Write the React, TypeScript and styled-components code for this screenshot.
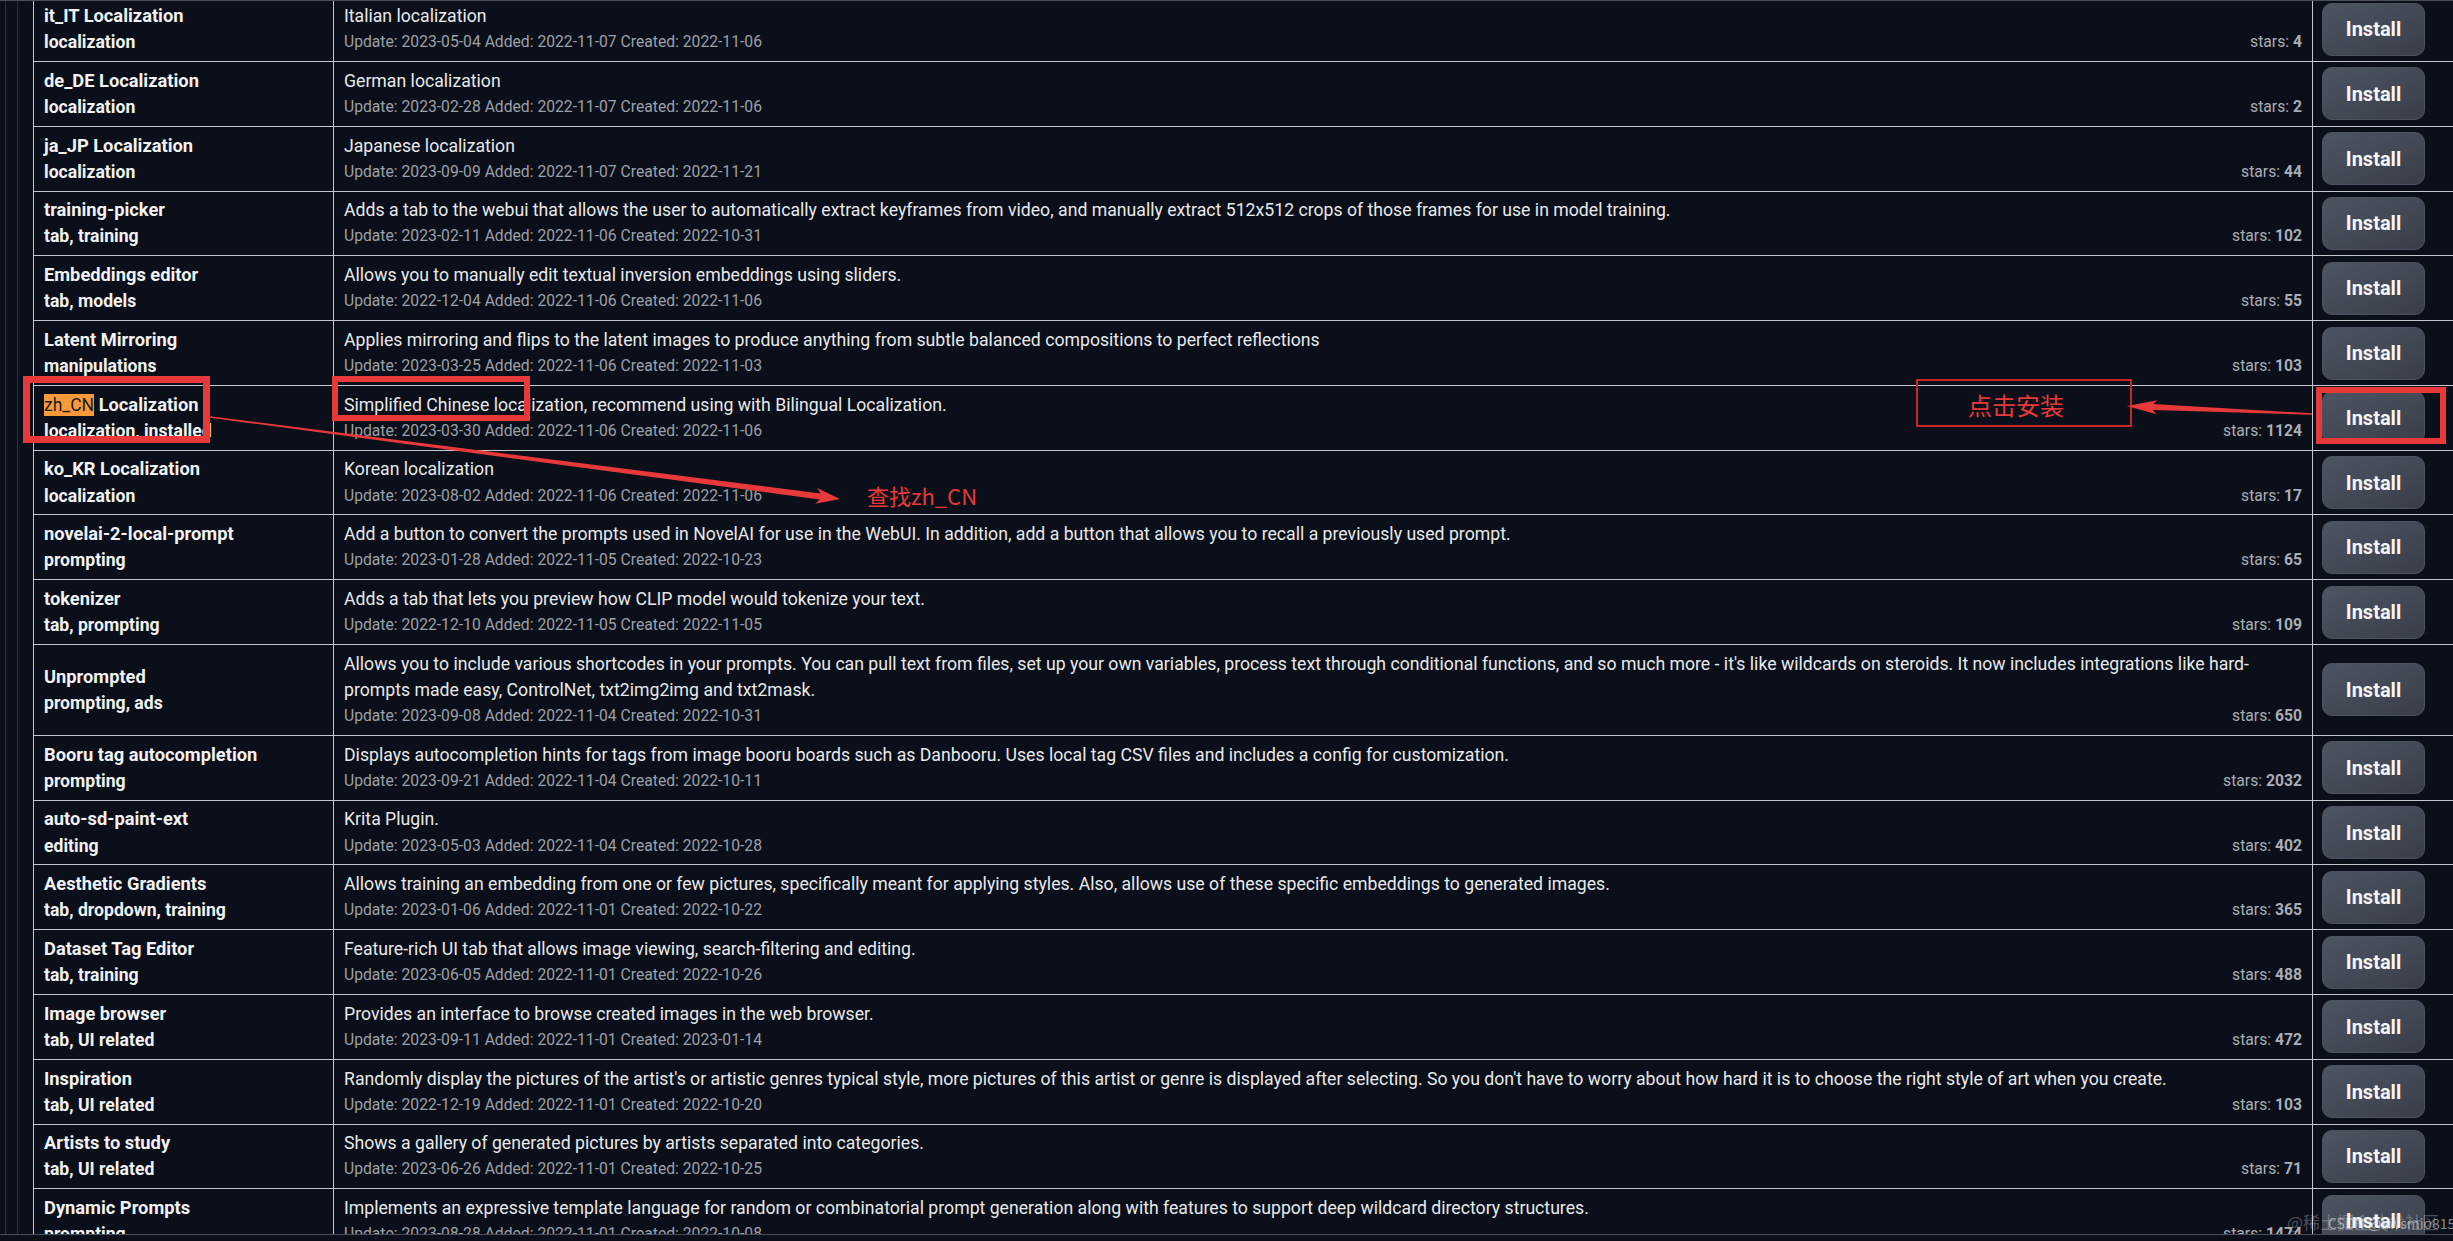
import React from "react";
import styled, { createGlobalStyle } from "styled-components";

const GlobalStyle = createGlobalStyle`
  html, body {
    margin: 0;
    padding: 0;
    background: #0b0f19;
  }
  body {
    font-family: Roboto, "Noto Sans", "Liberation Sans", sans-serif;
    overflow: hidden;
  }
`;

type Extension = {
  name: string;
  tags: string;
  desc: string;
  update: string;
  added: string;
  created: string;
  stars: number;
  match?: string;
};

const extensions: Extension[] = [
  { name: "it_IT Localization", tags: "localization", desc: "Italian localization", update: "2023-05-04", added: "2022-11-07", created: "2022-11-06", stars: 4 },
  { name: "de_DE Localization", tags: "localization", desc: "German localization", update: "2023-02-28", added: "2022-11-07", created: "2022-11-06", stars: 2 },
  { name: "ja_JP Localization", tags: "localization", desc: "Japanese localization", update: "2023-09-09", added: "2022-11-07", created: "2022-11-21", stars: 44 },
  { name: "training-picker", tags: "tab, training", desc: "Adds a tab to the webui that allows the user to automatically extract keyframes from video, and manually extract 512x512 crops of those frames for use in model training.", update: "2023-02-11", added: "2022-11-06", created: "2022-10-31", stars: 102 },
  { name: "Embeddings editor", tags: "tab, models", desc: "Allows you to manually edit textual inversion embeddings using sliders.", update: "2022-12-04", added: "2022-11-06", created: "2022-11-06", stars: 55 },
  { name: "Latent Mirroring", tags: "manipulations", desc: "Applies mirroring and flips to the latent images to produce anything from subtle balanced compositions to perfect reflections", update: "2023-03-25", added: "2022-11-06", created: "2022-11-03", stars: 103 },
  { name: "Localization", match: "zh_CN", tags: "localization, installed", desc: "Simplified Chinese localization, recommend using with Bilingual Localization.", update: "2023-03-30", added: "2022-11-06", created: "2022-11-06", stars: 1124 },
  { name: "ko_KR Localization", tags: "localization", desc: "Korean localization", update: "2023-08-02", added: "2022-11-06", created: "2022-11-06", stars: 17 },
  { name: "novelai-2-local-prompt", tags: "prompting", desc: "Add a button to convert the prompts used in NovelAI for use in the WebUI. In addition, add a button that allows you to recall a previously used prompt.", update: "2023-01-28", added: "2022-11-05", created: "2022-10-23", stars: 65 },
  { name: "tokenizer", tags: "tab, prompting", desc: "Adds a tab that lets you preview how CLIP model would tokenize your text.", update: "2022-12-10", added: "2022-11-05", created: "2022-11-05", stars: 109 },
  { name: "Unprompted", tags: "prompting, ads", desc: "Allows you to include various shortcodes in your prompts. You can pull text from files, set up your own variables, process text through conditional functions, and so much more - it's like wildcards on steroids. It now includes integrations like hard-prompts made easy, ControlNet, txt2img2img and txt2mask.", update: "2023-09-08", added: "2022-11-04", created: "2022-10-31", stars: 650 },
  { name: "Booru tag autocompletion", tags: "prompting", desc: "Displays autocompletion hints for tags from image booru boards such as Danbooru. Uses local tag CSV files and includes a config for customization.", update: "2023-09-21", added: "2022-11-04", created: "2022-10-11", stars: 2032 },
  { name: "auto-sd-paint-ext", tags: "editing", desc: "Krita Plugin.", update: "2023-05-03", added: "2022-11-04", created: "2022-10-28", stars: 402 },
  { name: "Aesthetic Gradients", tags: "tab, dropdown, training", desc: "Allows training an embedding from one or few pictures, specifically meant for applying styles. Also, allows use of these specific embeddings to generated images.", update: "2023-01-06", added: "2022-11-01", created: "2022-10-22", stars: 365 },
  { name: "Dataset Tag Editor", tags: "tab, training", desc: "Feature-rich UI tab that allows image viewing, search-filtering and editing.", update: "2023-06-05", added: "2022-11-01", created: "2022-10-26", stars: 488 },
  { name: "Image browser", tags: "tab, UI related", desc: "Provides an interface to browse created images in the web browser.", update: "2023-09-11", added: "2022-11-01", created: "2023-01-14", stars: 472 },
  { name: "Inspiration", tags: "tab, UI related", desc: "Randomly display the pictures of the artist's or artistic genres typical style, more pictures of this artist or genre is displayed after selecting. So you don't have to worry about how hard it is to choose the right style of art when you create.", update: "2022-12-19", added: "2022-11-01", created: "2022-10-20", stars: 103 },
  { name: "Artists to study", tags: "tab, UI related", desc: "Shows a gallery of generated pictures by artists separated into categories.", update: "2023-06-26", added: "2022-11-01", created: "2022-10-25", stars: 71 },
  { name: "Dynamic Prompts", tags: "prompting", desc: "Implements an expressive template language for random or combinatorial prompt generation along with features to support deep wildcard directory structures.", update: "2023-08-28", added: "2022-11-01", created: "2022-10-08", stars: 1474 },
];

const LINE = "#c3c6cc";
const RED = "#e8393a";

const Page = styled.div`
  position: relative;
  width: 100%;
  height: 1241px;
  overflow: hidden;
`;

const Frame = styled.div`
  height: 1235px;
  box-sizing: border-box;
  border-top: 1px solid #4a4f5a;
  border-bottom: 1px solid #4a4f5a;
  padding-left: 5px;
  overflow: hidden;
`;

const Gutter = styled.div<{ $pad: number }>`
  border-left: 1px solid #2a2f3b;
  padding-left: ${(p) => p.$pad}px;
  min-height: 1240px;
`;

const Table = styled.div`
  margin-top: -4.8px;
  border-top: 1px solid ${LINE};
  width: 2439px;
`;

const Row = styled.div`
  display: grid;
  grid-template-columns: 300px 1979px 160px;
  border-bottom: 1px solid ${LINE};
`;

const Cell = styled.div`
  box-sizing: border-box;
  border-left: 1px solid ${LINE};
  padding: 5.8px 10px;
  line-height: 26.1px;
`;

const NameCell = styled(Cell)`
  display: flex;
  flex-direction: column;
  justify-content: center;
  white-space: nowrap;
  color: #f1f2f4;
  font-weight: 700;
`;

const Name = styled.div`
  font-size: 18.3px;
`;

const Match = styled.span`
  background: #f89a3a;
  color: #1b1b1b;
  font-weight: 400;
  font-size: 17.5px;
  padding: 1px 0;
`;

const Tags = styled.div`
  font-size: 17.6px;
`;

const DescCell = styled(Cell)`
  color: #e7e9ec;
  font-size: 17.67px;
`;

const Info = styled.div`
  color: #9ca0a8;
  font-size: 15.7px;
`;

const Stars = styled.span`
  float: right;
  color: #a9adb5;

  b {
    font-weight: 700;
  }
`;

const ActionCell = styled(Cell)`
  display: flex;
  align-items: center;
  padding: 0 0 0 9px;
`;

const InstallButton = styled.button`
  width: 103px;
  height: 53px;
  border-radius: 10px;
  border: 1px solid #4b5260;
  background: linear-gradient(to bottom right, #4d5462, #393e49);
  color: #f5f6f8;
  font-family: Roboto, "Noto Sans", sans-serif;
  font-size: 20px;
  font-weight: 700;
  cursor: pointer;
`;

const Overlay = styled.svg`
  position: absolute;
  left: 0;
  top: 0;
  pointer-events: none;
`;

const Label = styled.div<{ $x: number; $y: number; $size: number }>`
  position: absolute;
  left: ${(p) => p.$x}px;
  top: ${(p) => p.$y}px;
  font-family: "Noto Sans CJK SC", "Noto Sans", sans-serif;
  font-size: ${(p) => p.$size}px;
  line-height: 1;
  color: ${RED};
  white-space: nowrap;
  pointer-events: none;
`;

const Watermark = styled.div<{ $x: number; $y: number; $size: number; $alpha: number }>`
  position: absolute;
  left: ${(p) => p.$x}px;
  top: ${(p) => p.$y}px;
  font-family: "Noto Sans CJK SC", "Noto Sans", sans-serif;
  font-size: ${(p) => p.$size}px;
  line-height: 1;
  color: rgba(235, 237, 240, ${(p) => p.$alpha});
  white-space: nowrap;
  pointer-events: none;
`;

// tapered annotation arrow, thin at the tail and barbed at the tip
const arrowPoints = (
  x1: number,
  y1: number,
  x2: number,
  y2: number,
  tail: number,
  shaft: number,
  headLen: number,
  headW: number
) => {
  const dx = x2 - x1;
  const dy = y2 - y1;
  const len = Math.hypot(dx, dy);
  const ux = dx / len;
  const uy = dy / len;
  const nx = -uy;
  const ny = ux;
  const bx = x2 - ux * headLen;
  const by = y2 - uy * headLen;
  const pts = [
    [x1 + (nx * tail) / 2, y1 + (ny * tail) / 2],
    [bx + (nx * shaft) / 2, by + (ny * shaft) / 2],
    [bx - ux * 4 + nx * headW, by - uy * 4 + ny * headW],
    [x2, y2],
    [bx - ux * 4 - nx * headW, by - uy * 4 - ny * headW],
    [bx - (nx * shaft) / 2, by - (ny * shaft) / 2],
    [x1 - (nx * tail) / 2, y1 - (ny * tail) / 2],
  ];
  return pts.map((p) => p.map((v) => v.toFixed(1)).join(",")).join(" ");
};

const Annotations = () => (
  <>
    <Overlay width={2453} height={1241} viewBox="0 0 2453 1241">
      <rect x={26.5} y={379.5} width={180} height={60} fill="none" stroke={RED} strokeWidth={7} />
      <rect x={335} y={379} width={192} height={39} fill="none" stroke={RED} strokeWidth={6} />
      <rect x={1917} y={380} width={214} height={46} fill="none" stroke="#cc2323" strokeWidth={2} />
      <rect x={2319} y={390} width={124} height={51} fill="none" stroke={RED} strokeWidth={6} />
      <polygon points={arrowPoints(210, 417, 840, 499, 1.5, 6, 20, 8)} fill={RED} />
      <polygon points={arrowPoints(2312, 414, 2127, 406, 1.5, 6, 26, 7)} fill={RED} />
    </Overlay>
    <Label $x={867} $y={484} $size={22}>查找zh_CN</Label>
    <Label $x={1968} $y={393} $size={24}>点击安装</Label>
    <Watermark $x={2287} $y={1213} $size={17} $alpha={0.3}>@稀土掘金技术社区</Watermark>
    <Watermark $x={2328} $y={1216} $size={14} $alpha={0.55}>CSDN @awsmio815</Watermark>
  </>
);

const ExtensionRow = ({ ext }: { ext: Extension }) => (
  <Row>
    <NameCell>
      <Name>
        {ext.match && <Match>{ext.match}</Match>}
        {ext.match ? " " : ""}
        {ext.name}
      </Name>
      <Tags>{ext.tags}</Tags>
    </NameCell>
    <DescCell>
      <div>{ext.desc}</div>
      <Info>
        <Stars>
          stars: <b>{ext.stars}</b>
        </Stars>
        Update: {ext.update} Added: {ext.added} Created: {ext.created}
      </Info>
    </DescCell>
    <ActionCell>
      <InstallButton type="button">Install</InstallButton>
    </ActionCell>
  </Row>
);

export default function App() {
  return (
    <>
      <GlobalStyle />
      <Page>
        <Frame>
          <Gutter $pad={11}>
            <Gutter $pad={15}>
              <Table>
                {extensions.map((ext) => (
                  <ExtensionRow key={ext.name + ext.update} ext={ext} />
                ))}
              </Table>
            </Gutter>
          </Gutter>
        </Frame>
        <Annotations />
      </Page>
    </>
  );
}
